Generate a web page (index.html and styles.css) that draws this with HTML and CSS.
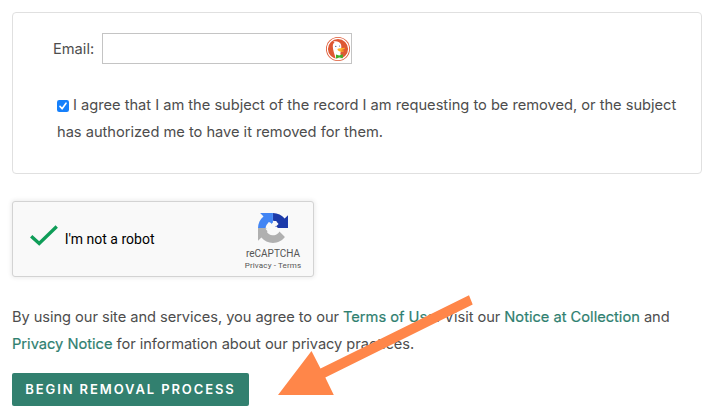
FILE: index.html
```html
<!DOCTYPE html>
<html lang="en">
<head>
<meta charset="utf-8">
<title>Record Removal</title>
<link rel="stylesheet" href="styles.css">
</head>
<body>
<form class="page">
  <section class="panel">
    <div class="email-row">
      <label class="email-label" for="email">Email:</label>
      <div class="email-field">
        <input class="email-input" id="email" type="text">
        <svg class="duck" viewBox="0 0 24 24">
          <circle cx="12" cy="12" r="12" fill="#de5833"/>
          <circle cx="12" cy="12" r="10.6" fill="#de5833" stroke="#fff" stroke-width="1.1"/>
          <path d="M9.6 21.6C8.6 17.5 6.8 13 6.8 9.6C6.8 7 7.6 5.9 8.6 5.6L7.2 4.5C10.8 3.6 13.4 4.8 14.6 6.8C15.6 8.4 15.3 10 15.2 12.1L14.4 16.5L15.3 21.6Q12.6 22.4 9.6 21.6Z" fill="#fff"/>
          <path d="M11.4 12.1C12.8 10.9 15.7 11.4 18.8 10.8C19.4 11.9 16.5 12.8 15 13.3C16 13.9 17.8 13.4 18.2 14C17 15.4 11.5 15.2 11.4 12.1Z" fill="#fdb52a"/>
          <path d="M10 17.6L13.2 18.6L16.8 17.2V21.2L13.4 20.4L10 21.4Z" fill="#3fae2a"/>
          <circle cx="9.8" cy="9.4" r=".6" fill="#2d4f8e"/>
          <circle cx="13.6" cy="9.1" r=".5" fill="#2d4f8e"/>
        </svg>
      </div>
    </div>
    <label class="consent">
      <input class="box" type="checkbox" checked><svg class="check" viewBox="0 0 12 12"><rect width="12" height="12" rx="2.2"/><path d="M3 6.4L5.1 8.8L9 3.2"/></svg><span class="line">I agree that I am the subject of the record I am requesting to be removed, or the subject</span><br>
      <span class="line">has authorized me to have it removed for them.</span>
    </label>
  </section>

  <section class="captcha">
    <svg class="verified" viewBox="0 0 28 21"><path d="M1.2 11.2L9.3 18.6L27 1.4"/></svg>
    <span class="robot">I'm not a robot</span>
    <div class="brand">
      <svg class="brand-logo" viewBox="0 0 64 64">
        <path d="M64 31.955l-.033-1.37V4.687l-7.16 7.16C50.948 4.674 42.033.093 32.05.093V16.4c4.976.393 9.288 3.14 11.828 7.124l-5 5L32 26V32H64" fill="#1c3aa9"/>
        <path d="M31.862.094l-1.37.033H4.594l7.16 7.16C4.58 13.147 0 22.06 0 32.046H16.3c.393-4.976 3.14-9.288 7.124-11.828l4.5 4.5L31.86 20V.095" fill="#4285f4"/>
        <path d="M.001 32.045l.033 1.37v25.898l7.16-7.16c5.86 7.173 14.774 11.754 24.76 11.754 10.4 0 19.622-4.96 25.458-12.64l-11.736-11.86a15.55 15.55 0 0 1-4.754 5.334c-2.05 1.6-4.952 2.906-8.968 2.906-.485 0-.86-.057-1.135-.163-4.976-.393-9.288-3.14-11.828-7.124l8.307-8.307L0 32.046" fill="#b0b0b0"/>
        <path d="M22 20C26 18.5 29 22 30.5 26C31 19 35 16 39.5 17.5C41 22 39 25.5 36 28C40 28 42 30 42 32H30L22 41L16 33.5L25 30C21 27 20 23 22 20Z" fill="#f9f9f9"/>
      </svg>
      <span class="brand-name">reCAPTCHA</span>
      <span class="brand-links">Privacy - Terms</span>
    </div>
  </section>

  <p class="legal">
    <span class="line">By using our site and services, you agree to our <a>Terms of Use</a>. Visit our <a>Notice at Collection</a> and</span><br>
    <span class="line"><a>Privacy Notice</a> for information about our privacy practices.</span>
  </p>
  <button class="submit" type="button">BEGIN REMOVAL PROCESS</button>
</form>
<svg class="arrow" viewBox="0 0 717 418"><path d="M278 395L311.5 351L320.5 368.5L469 295.3L472.7 304.5L325.3 377.5L333.8 395Z"/></svg>
</body>
</html>
```
FILE: styles.css
```css
* { box-sizing: border-box; }

body {
  margin: 0;
  background: #fff;
  color: #4d4d4d;
  font: 14.65px/27px Inter, "Liberation Sans", sans-serif;
  overflow: hidden;
}

.page { padding: 12px 15px 0 12px; }

.panel {
  height: 162px;
  padding: 20px 0 0 40px;
  border: 1px solid #e0e0e0;
  border-radius: 4px;
}

.email-row { display: flex; align-items: center; height: 31px; }
.email-label { width: 49px; padding-top: 2px; }

.email-field { position: relative; width: 250px; height: 31px; }
.email-input {
  display: block;
  width: 100%;
  height: 100%;
  border: 1px solid #c4c4c4;
  outline: 0;
}
.duck { position: absolute; top: 4px; right: 2px; width: 24px; height: 24px; }

.consent { display: block; margin: 28px 0 0 4px; white-space: nowrap; letter-spacing: -.01px; }
.box { display: none; }
.check { width: 12px; height: 12px; margin-right: 4px; vertical-align: -2px; }
.check rect { fill: #1680fb; }
.check path { fill: none; stroke: #fff; stroke-width: 1.6; stroke-linecap: round; stroke-linejoin: round; }

.captcha {
  display: flex;
  align-items: center;
  width: 302px;
  height: 76px;
  margin-top: 27px;
  padding-left: 17px;
  background: #f9f9f9;
  border: 1px solid #d3d3d3;
  border-radius: 3px;
  box-shadow: 0 0 4px 1px rgba(0, 0, 0, .08);
  font-family: Roboto, sans-serif;
}
.verified { width: 28px; height: 21px; margin-top: -7px; }
.verified path { fill: none; stroke: #0f9d58; stroke-width: 3.4; }
.robot { margin-left: 7px; width: 170px; color: #000; font-size: 14px; }
.brand { display: flex; flex: none; flex-direction: column; align-items: center; width: 80px; padding-top: 5px; }
.brand-logo { width: 30px; height: 30px; margin-top: 1px; }
.brand-name { margin-top: 5px; color: #555; font-size: 10px; line-height: 12px; }
.brand-links { color: #555; font-size: 8px; line-height: 11px; letter-spacing: .15px; }

.legal { margin: 27px 0 0; white-space: nowrap; letter-spacing: -.055px; }
.legal a { color: #2f8070; letter-spacing: 0; -webkit-text-stroke: .2px #2f8070; }

.submit {
  display: block;
  width: 237px;
  height: 33px;
  margin-top: 15px;
  padding: 0;
  border: 0;
  border-radius: 2px;
  background: #32806f;
  color: #fff;
  font: 600 13px/33px Inter, sans-serif;
  letter-spacing: 1.9px;
  white-space: nowrap;
}

.arrow { position: absolute; top: 0; left: 0; width: 717px; height: 418px; pointer-events: none; }
.arrow path { fill: #ff8649; }
```
